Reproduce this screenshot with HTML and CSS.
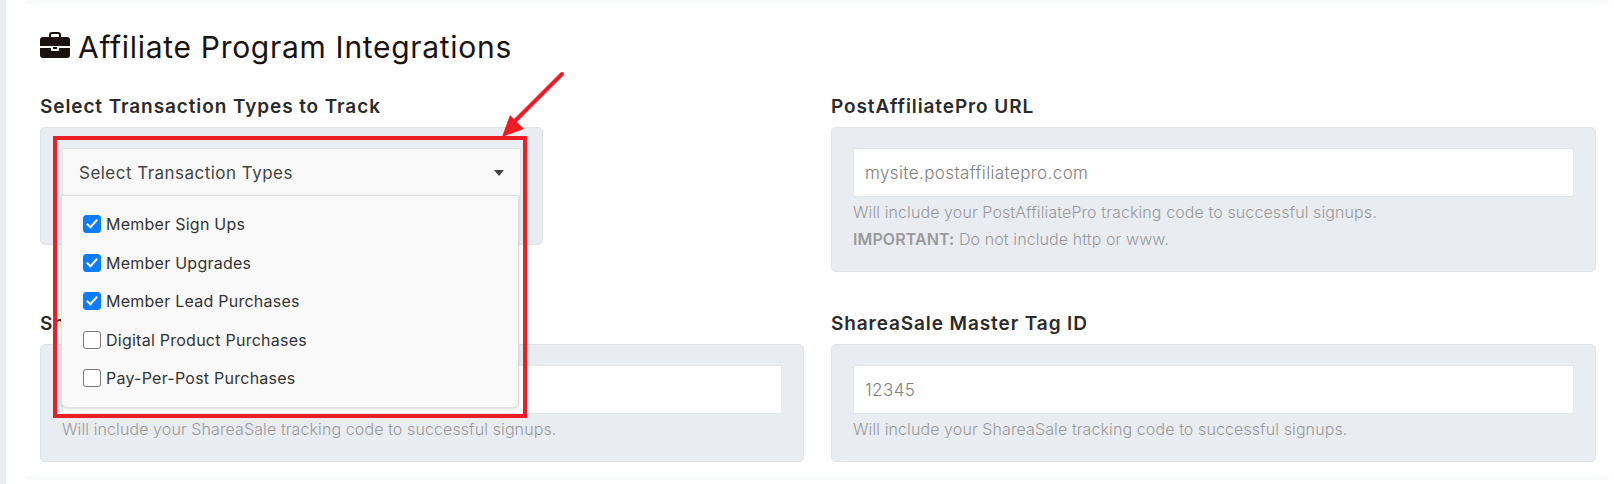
FILE: index.html
```html
<!DOCTYPE html>
<html>
<head>
  <title>Affiliate Program Integrations</title>
  <link rel="stylesheet" href="styles.css">
</head>
<body>
  <div class="page">
    <div class="strip"></div>
    <div class="card">
      <h2 class="title">
        <svg class="title-icon" viewBox="0 0 30 26"><path d="M10 5V3a2 2 0 0 1 2-2h6a2 2 0 0 1 2 2v2" fill="none" stroke="#1a1210" stroke-width="2"/><path d="M3 5h24a3 3 0 0 1 3 3v6H0V8a3 3 0 0 1 3-3z" fill="#1a1210"/><path d="M0 16h11v2a1 1 0 0 0 1 1h6a1 1 0 0 0 1-1v-2h11v7a3 3 0 0 1-3 3H3a3 3 0 0 1-3-3z" fill="#1a1210"/><rect x="13" y="15" width="4" height="2" fill="#1a1210"/></svg>
        Affiliate Program Integrations
      </h2>

      <div class="grid">
        <div class="field">
          <label>Select Transaction Types to Track</label>
          <div class="well well-short">
            <div class="select">
              <span>Select Transaction Types</span>
              <i class="caret"></i>
            </div>
            <div class="menu">
              <label class="opt"><input type="checkbox" checked> Member Sign Ups</label>
              <label class="opt"><input type="checkbox" checked> Member Upgrades</label>
              <label class="opt"><input type="checkbox" checked> Member Lead Purchases</label>
              <label class="opt"><input type="checkbox"> Digital Product Purchases</label>
              <label class="opt"><input type="checkbox"> Pay-Per-Post Purchases</label>
            </div>
          </div>
        </div>

        <div class="field">
          <label>PostAffiliatePro URL</label>
          <div class="well well-tall">
            <input class="text" type="text" placeholder="mysite.postaffiliatepro.com">
            <p class="help">Will include your PostAffiliatePro tracking code to successful signups.</p>
            <p class="help"><b>IMPORTANT:</b> Do not include http or www.</p>
          </div>
        </div>

        <div class="field">
          <label>ShareASale Affiliate ID</label>
          <div class="well">
            <input class="text" type="text">
            <p class="help">Will include your ShareaSale tracking code to successful signups.</p>
          </div>
        </div>

        <div class="field">
          <label>ShareaSale Master Tag ID</label>
          <div class="well">
            <input class="text" type="text" placeholder="12345">
            <p class="help">Will include your ShareaSale tracking code to successful signups.</p>
          </div>
        </div>
      </div>
    </div>
    <div class="strip"></div>

    <div class="redbox"></div>
    <svg class="arrow" viewBox="0 0 70 70"><path d="M62 3L16 49" stroke="#ee1c25" stroke-width="4" fill="none" stroke-linecap="round"/><path d="M2 66l8-22 14 14z" fill="#ee1c25"/></svg>
  </div>
</body>
</html>
```

FILE: styles.css
```css
html, body {
  margin: 0;
  height: 484px;
  overflow: hidden;
}
body {
  background: #e9ecf1;
  padding-left: 6px;
  font-family: "Inter", "Noto Sans", sans-serif;
  color: #333;
}
.page {
  position: relative;
  background: #fff;
  height: 484px;
  padding-left: 20px;
}
.strip {
  height: 4px;
  margin-right: 5px;
  background: #f9fafa;
}
.strip:last-of-type {
  height: 8px;
}
.card {
  padding: 23px 0 0 14px;
  height: 472px;
  box-sizing: border-box;
}
.title {
  margin: 0 0 28px;
  font-size: 30px;
  font-weight: 400;
  line-height: 40px;
  letter-spacing: 0.7px;
  color: #1a1210;
  display: flex;
  align-items: center;
  gap: 8px;
}
.title-icon {
  width: 30px;
  height: 26px;
  margin-bottom: 4px;
}
.grid {
  display: grid;
  grid-template-columns: 764px 765px;
  column-gap: 27px;
  row-gap: 40px;
  align-items: start;
}
.field > label {
  display: block;
  font-size: 19px;
  font-weight: 600;
  line-height: 24px;
  letter-spacing: 0.9px;
  margin-bottom: 8px;
  color: #2b2b2b;
}
.well {
  position: relative;
  background: #e9ecf1;
  border: 1px solid #dfe2e7;
  border-radius: 5px;
  padding: 20px 21px;
  box-sizing: border-box;
  height: 118px;
}
.well-tall {
  height: 145px;
}
.well-short {
  width: 503px;
}
.text {
  display: block;
  width: 100%;
  height: 49px;
  box-sizing: border-box;
  border: 1px solid #e3e6ea;
  border-radius: 2px;
  background: #fff;
  padding: 0 11px;
  font: 300 17px "Inter", sans-serif;
  letter-spacing: 0.4px;
}
.text::placeholder {
  color: #808080;
}
.help {
  margin: 3px 0 0;
  font-size: 16px;
  font-weight: 300;
  line-height: 24px;
  letter-spacing: 0.1px;
  color: #9a9a9a;
}
.help + .help {
  margin-top: 3px;
}
.help b {
  font-weight: 600;
}
.select {
  height: 49px;
  box-sizing: border-box;
  background: #f9f9f9;
  border: 1px solid #dfe2e7;
  border-radius: 2px;
  padding: 0 16px;
  display: flex;
  align-items: center;
  justify-content: space-between;
  font-size: 17px;
  letter-spacing: 0.47px;
  color: #444;
}
.caret {
  border-left: 5px solid transparent;
  border-right: 5px solid transparent;
  border-top: 6px solid #444;
}
.menu {
  position: absolute;
  z-index: 2;
  left: 20px;
  top: 67px;
  width: 458px;
  height: 213px;
  box-sizing: border-box;
  padding: 9px 21px;
  background: #f9f9f9;
  border: 1px solid #dcdfe3;
  border-radius: 0 0 6px 6px;
  box-shadow: 0 1px 3px rgba(0,0,0,.15);
}
.opt {
  display: flex;
  align-items: center;
  gap: 5px;
  height: 38.5px;
  font-size: 16px;
  letter-spacing: 0.25px;
  color: #333;
}
.opt input {
  appearance: none;
  position: relative;
  flex: none;
  width: 18px;
  height: 18px;
  margin: 0;
  background: #fff;
  border: 1px solid #767676;
  border-radius: 3px;
}
.opt input:checked {
  background: #0a7cff;
  border-color: #0a7cff;
}
.opt input:checked::after {
  content: "";
  position: absolute;
  left: 5px;
  top: 1px;
  width: 4px;
  height: 9px;
  border: solid #fff;
  border-width: 0 2.5px 2.5px 0;
  transform: rotate(42deg);
}
.redbox {
  position: absolute;
  z-index: 3;
  left: 47px;
  top: 136px;
  width: 466px;
  height: 274px;
  border: 4px solid #ee1c25;
}
.arrow {
  position: absolute;
  z-index: 4;
  left: 494px;
  top: 71px;
  width: 70px;
  height: 70px;
}
```
